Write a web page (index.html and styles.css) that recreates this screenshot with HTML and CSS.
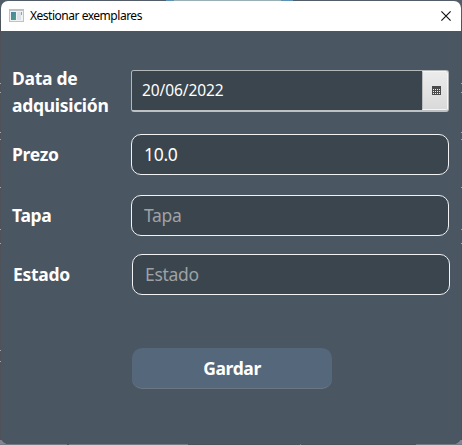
FILE: index.html
```html
<!DOCTYPE html>
<html lang="gl">
<head>
<meta charset="utf-8">
<title>Xestionar exemplares</title>
<link rel="stylesheet" href="styles.css">
</head>
<body>
<div class="backdrop">
  <svg class="desktop" width="462" height="445" viewBox="0 0 462 445" shape-rendering="crispEdges">
    <path fill="#4f5359" d="M0 0h462v445H0z"/>
    <path fill="#535c69" d="M0 0h462v20H0z"/>
    <path fill="#5b92b5" d="M166 0h127v1H166z"/>
    <path fill="#99b1b6" d="M174 0h107v1H174z"/>
    <path fill="#a5a8ac" d="M0 83h1v1H0zM0 92h1v1H0zM0 132h1v1H0zM0 139h1v1H0zM0 187h1v1H0zM0 229h1v1H0zM0 243h1v1H0zM0 350h1v1H0zM0 361h1v1H0zM461 83h1v1h-1zM461 92h1v1h-1zM461 132h1v1h-1zM461 139h1v1h-1zM461 187h1v1h-1zM461 229h1v1h-1zM461 243h1v1h-1z"/>
    <path fill="#858591" d="M0 440h6v5H0zM456 440h6v5h-6z"/>
    <path fill="#777983" d="M0 444h67v1H0zM69 444h119v1H69zM300 444h1v1h-1zM416 444h46v1h-46z"/>
  </svg>
  <main class="window">
    <header class="titlebar">
      <svg class="app-icon" width="15" height="13" viewBox="0 0 15 13">
        <defs><linearGradient id="pane" x1="0" y1="0" x2="1" y2="1"><stop offset="0" stop-color="#4a7fb0"/><stop offset="1" stop-color="#4fa277"/></linearGradient></defs>
        <path fill="#bfc1c3" d="M0 0h15v13H0z"/>
        <path fill="#f1f2f3" d="M1 2h13v10H1z"/>
        <path fill="url(#pane)" d="M2 3h5v8H2z"/>
        <path fill="#dce2e8" d="M8 3h4v8H8z"/>
        <path fill="#79a8bf" d="M12 3h1v3h-1z"/>
      </svg>
      <h1 class="title">Xestionar exemplares</h1>
      <svg class="close" width="10" height="10" viewBox="0 0 10 10"><path d="M.4.4l9.2 9.2M9.6.4L.4 9.6" stroke="#111" stroke-width="1.15"/></svg>
    </header>
    <form class="form">
      <div class="row row-date">
        <label class="label" for="date">Data de<br>adquisición</label>
        <div class="datepicker">
          <input class="date-input" id="date" value="20/06/2022">
          <button class="date-button" type="button" aria-label="Calendario">
            <svg width="9" height="9" viewBox="0 0 9 9" shape-rendering="crispEdges"><path fill="#4b4b4b" d="M0 0h9v9H0z"/><path fill="#eee" d="M1 3h1v1H1zM3 3h1v1H3zM5 3h1v1H5zM7 3h1v1H7zM1 5h1v1H1zM3 5h1v1H3zM5 5h1v1H5zM7 5h1v1H7zM1 7h1v1H1zM3 7h1v1H3zM5 7h1v1H5zM7 7h1v1H7z"/></svg>
          </button>
        </div>
      </div>
      <div class="row row-price">
        <label class="label" for="price">Prezo</label>
        <input class="field" id="price" value="10.0">
      </div>
      <div class="row row-cover">
        <label class="label" for="cover">Tapa</label>
        <input class="field" id="cover" placeholder="Tapa">
      </div>
      <div class="row row-state">
        <label class="label" for="state">Estado</label>
        <input class="field" id="state" placeholder="Estado">
      </div>
      <button class="save" type="button">Gardar</button>
    </form>
  </main>
</div>
</body>
</html>
```
FILE: styles.css
```css
* { box-sizing: border-box; }
body {
  margin: 0;
  overflow: hidden;
  font-family: "Noto Sans", "Open Sans", sans-serif;
}
.backdrop {
  position: relative;
  width: 462px;
  height: 445px;
  padding: 1px;
}
.desktop { position: absolute; inset: 0; }
.window {
  position: relative;
  height: 443px;
  overflow: hidden;
  border-radius: 7px;
  background: #4b5663;
}
.titlebar {
  display: flex;
  align-items: center;
  height: 30px;
  padding: 0 10px 0 8px;
  background: #fff;
}
.app-icon { margin-top: -2px; }
.title {
  margin: 0 0 0 6px;
  font-size: 12px;
  font-weight: 400;
  line-height: 28px;
  letter-spacing: -0.48px;
  color: #000;
}
.close { margin-left: auto; margin-top: -1px; }
.form {
  display: flex;
  flex-direction: column;
  padding: 34px 12px 0 11px;
}
.row {
  display: grid;
  grid-template-columns: 119px 318px;
  align-items: center;
}
.row-price { margin-top: 15px; }
.row-cover { margin-top: 20px; }
.row-state { margin: 18px -1px 0 1px; }
.label {
  font-size: 17.5px;
  font-weight: 700;
  line-height: 27px;
  letter-spacing: -0.3px;
  white-space: nowrap;
  color: #fff;
}
.datepicker {
  display: flex;
  height: 42px;
  margin-top: -2px;
  border: 1px solid #b5b8bb;
  border-bottom: 2px solid #bfc2c5;
  border-radius: 3px;
  overflow: hidden;
}
.date-input {
  flex: 1;
  min-width: 0;
  padding: 0 10px 1px;
  border: 0;
  background: #3b454e;
  color: #fff;
  font: 400 15.5px "Noto Sans", sans-serif;
  letter-spacing: -0.08px;
}
.date-button {
  display: grid;
  place-items: center;
  width: 26px;
  padding: 0 0 0 3px;
  border: 1px solid #f5f5f5;
  border-left: 1px solid #bbb;
  background: linear-gradient(#ececec, #d9d9d9);
}
.field {
  width: 318px;
  height: 41px;
  padding: 0 12px 1px;
  border: 1px solid #f2f3f4;
  border-radius: 10px;
  background: #3b454e;
  color: #fff;
  font: 400 17.5px "Noto Sans", sans-serif;
  letter-spacing: -0.3px;
}
.field::placeholder { color: #9fa2a5; opacity: 1; }
.save {
  width: 200px;
  height: 41px;
  margin: 53px 0 0 120px;
  padding: 0;
  border: 0;
  border-bottom: 1px solid #6c7682;
  border-radius: 10px;
  background: #54677b;
  color: #fff;
  font: 700 17.5px "Noto Sans", sans-serif;
  letter-spacing: -0.38px;
}
```
